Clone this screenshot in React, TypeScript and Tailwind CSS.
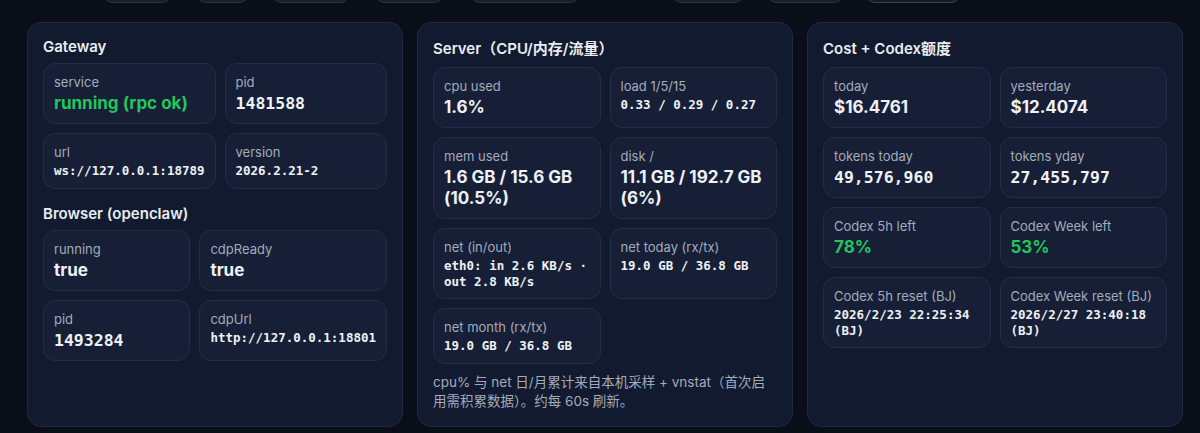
import React from "react";

type Kind = "sans" | "mono" | "monoSm";

function Cell({ label, value, kind = "sans", green = false }: { label: string; value: string; kind?: Kind; green?: boolean }) {
  const valueCls =
    kind === "sans"
      ? "mt-[2px] text-[17px] font-bold leading-[21px]"
      : kind === "mono"
      ? "mt-[2px] font-['DejaVu_Sans_Mono',monospace] text-[16.5px] font-bold leading-[21px]"
      : "mt-[2px] font-['DejaVu_Sans_Mono',monospace] text-[12.5px] font-bold leading-[15.5px]";
  return (
    <div className="rounded-[12px] border border-[#232d45] bg-[#161f35] px-[10px] py-[9px]">
      <div className="text-[13px] leading-[18px] text-[#a3abbd]">{label}</div>
      <div className={`${valueCls} ${green ? "text-[#22c55e]" : "text-[#eef1f7]"}`}>{value}</div>
    </div>
  );
}

function Title({ children, className = "" }: { children: React.ReactNode; className?: string }) {
  return <div className={`mb-[7px] text-[15px] font-semibold text-[#e8ecf4] ${className}`}>{children}</div>;
}

function Panel({ children }: { children: React.ReactNode }) {
  return (
    <div className="w-[376px] shrink-0 rounded-[14px] border border-[#1f2a42] bg-[#111a2e] p-[15px]">{children}</div>
  );
}

const btn = "h-[30px] shrink-0 rounded-[8px] border border-[#2a3142] bg-[#1a1f2b]";

export default function App() {
  return (
    <div className="h-[433px] w-full overflow-hidden bg-[#0a0e18] font-['Inter','Noto_Sans_CJK_SC',sans-serif] text-[#e6eaf2]">
      <div className="flex h-[3px] items-end overflow-hidden">
        <div className={`${btn} ml-[104px] w-[67px]`} />
        <div className={`${btn} ml-[26px] w-[51px]`} />
        <div className={`${btn} ml-[25px] w-[76px]`} />
        <div className={`${btn} ml-[27px] w-[67px]`} />
        <div className={`${btn} ml-[28px] w-[108px]`} />
        <div className={`${btn} ml-[94px] w-[70px]`} />
        <div className={`${btn} ml-[25px] w-[75px]`} />
        <div className="ml-[23px] h-[31px] w-[94px] shrink-0 rounded-[9px] border border-[#3a4257] bg-[#161b27]" />
      </div>
      <div className="mt-[19px] flex h-[405px] items-stretch gap-[14px] pl-[27px]">
        <Panel>
          <Title className="leading-[18px]">Gateway</Title>
          <div className="grid grid-cols-[1fr_1fr] gap-[9px]">
            <Cell label="service" value="running (rpc ok)" green />
            <Cell label="pid" value="1481588" kind="mono" />
            <Cell label="url" value="ws://127.0.0.1:18789" kind="monoSm" />
            <Cell label="version" value="2026.2.21-2" kind="monoSm" />
          </div>
          <Title className="mt-4 leading-[18px]">Browser (openclaw)</Title>
          <div className="grid grid-cols-[1fr_1fr] gap-[9px]">
            <Cell label="running" value="true" />
            <Cell label="cdpReady" value="true" />
            <Cell label="pid" value="1493284" kind="mono" />
            <Cell label="cdpUrl" value="http://127.0.0.1:18801" kind="monoSm" />
          </div>
        </Panel>
        <Panel>
          <Title className="leading-[22px]">Server（CPU/内存/流量）</Title>
          <div className="grid grid-cols-[1fr_1fr] gap-[9px]">
            <Cell label="cpu used" value="1.6%" />
            <Cell label="load 1/5/15" value="0.33 / 0.29 / 0.27" kind="monoSm" />
            <Cell label="mem used" value="1.6 GB / 15.6 GB (10.5%)" />
            <Cell label="disk /" value="11.1 GB / 192.7 GB (6%)" />
            <Cell label="net (in/out)" value="eth0: in 2.6 KB/s · out 2.8 KB/s" kind="monoSm" />
            <Cell label="net today (rx/tx)" value="19.0 GB / 36.8 GB" kind="monoSm" />
            <Cell label="net month (rx/tx)" value="19.0 GB / 36.8 GB" kind="monoSm" />
          </div>
          <div className="mt-[9px] text-[13.5px] leading-[19.5px] text-[#a3abbd]">
            cpu% 与 net 日/月累计来自本机采样 + vnstat（首次启用需积累数据）。约每 60s 刷新。
          </div>
        </Panel>
        <Panel>
          <Title className="leading-[22px]">Cost + Codex额度</Title>
          <div className="grid grid-cols-[1fr_1fr] gap-[9px]">
            <Cell label="today" value="$16.4761" />
            <Cell label="yesterday" value="$12.4074" />
            <Cell label="tokens today" value="49,576,960" kind="mono" />
            <Cell label="tokens yday" value="27,455,797" kind="mono" />
            <Cell label="Codex 5h left" value="78%" green />
            <Cell label="Codex Week left" value="53%" green />
            <Cell label="Codex 5h reset (BJ)" value="2026/2/23 22:25:34 (BJ)" kind="monoSm" />
            <Cell label="Codex Week reset (BJ)" value="2026/2/27 23:40:18 (BJ)" kind="monoSm" />
          </div>
        </Panel>
      </div>
    </div>
  );
}
